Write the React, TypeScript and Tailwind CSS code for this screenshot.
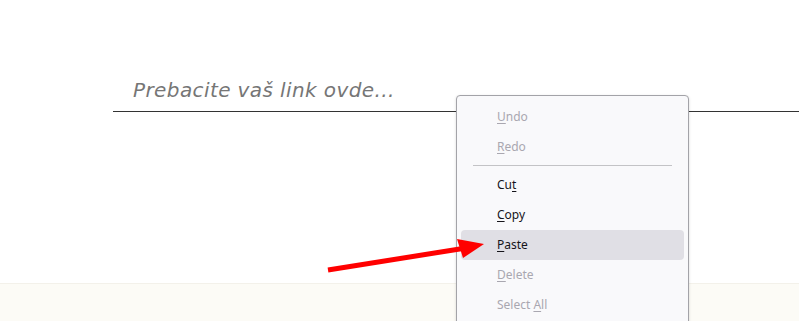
import React from 'react';

type Item = { label: string; key: number; disabled?: boolean; active?: boolean };

const topItems: Item[] = [
  { label: 'Undo', key: 0, disabled: true },
  { label: 'Redo', key: 0, disabled: true },
];

const bottomItems: Item[] = [
  { label: 'Cut', key: 2 },
  { label: 'Copy', key: 0 },
  { label: 'Paste', key: 0, active: true },
  { label: 'Delete', key: 0, disabled: true },
  { label: 'Select All', key: 7, disabled: true },
];

const MenuRow = ({ item }: { item: Item }) => {
  const before = item.label.slice(0, item.key);
  const ch = item.label.charAt(item.key);
  const after = item.label.slice(item.key + 1);
  return (
    <div
      className={`h-[30px] flex items-center pl-9 rounded-[4px] text-[12px] ${
        item.active ? 'bg-[#e0dfe5]' : ''
      } ${item.disabled ? 'text-[#a9a7b0]' : 'text-[#15141a]'}`}
    >
      <span className="whitespace-pre">
        {before}
        <span className="underline underline-offset-2">{ch}</span>
        {after}
      </span>
    </div>
  );
};

export default function App() {
  return (
    <div className="relative w-[799px] h-[321px] overflow-hidden bg-white font-['Open_Sans',sans-serif]">
      <div className="flex flex-col h-full">
        <div className="flex-1 pt-[72px] pl-[113px]">
          <div className="border-b border-[#333] h-[40px] flex items-center pl-[20px] pb-[3px]">
            <input
              className="w-full bg-transparent outline-none text-[20px] italic font-['DejaVu_Sans',sans-serif] tracking-[0.4px] placeholder:text-[#767676] placeholder:italic"
              placeholder="Prebacite vaš link ovde..."
            />
          </div>
        </div>
        <div className="h-[38px] bg-[#fcfbf6] border-t border-[#f3f1ea]" />
      </div>

      {/* context menu */}
      <div className="absolute left-[456px] top-[95px] w-[233px] h-[240px] bg-[#f9f9fb] border border-[#a3a3a8] rounded-[4px] shadow-[0_1px_3px_rgba(0,0,0,0.15)] px-[4px] pt-[6px] font-['Noto_Sans',sans-serif]">
        {topItems.map((it) => (
          <MenuRow key={it.label} item={it} />
        ))}
        <div className="mx-[12px] mt-[3px] mb-[4px] h-px bg-[#c3c3c6]" />
        {bottomItems.map((it) => (
          <MenuRow key={it.label} item={it} />
        ))}
      </div>

      {/* red arrow */}
      <svg className="absolute left-0 top-0 pointer-events-none" width="799" height="321" viewBox="0 0 799 321">
        <line x1="328" y1="270" x2="466" y2="248" stroke="#f00" strokeWidth="5" />
        <polygon points="484,244 457,239 463,258" fill="#f00" />
      </svg>
    </div>
  );
}
